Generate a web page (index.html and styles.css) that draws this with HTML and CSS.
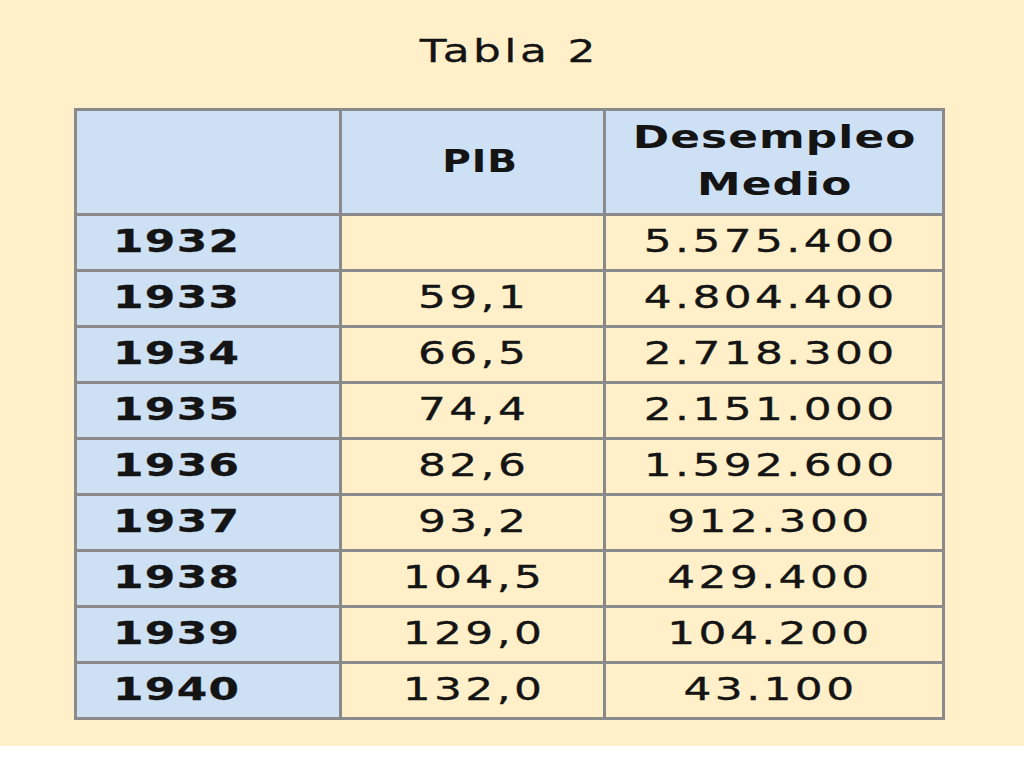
FILE: index.html
```html
<!DOCTYPE html>
<html lang="es">
<head>
<meta charset="utf-8">
<title>Tabla 2</title>
<link rel="stylesheet" href="styles.css">
</head>
<body>
<div class="sheet">
  <h1 class="title"><span class="wide">Tabla 2</span></h1>
  <table class="data">
    <colgroup>
      <col class="c1"><col class="c2"><col class="c3">
    </colgroup>
    <thead>
      <tr>
        <th class="year"></th>
        <th class="pib"><span class="wide">PIB</span></th>
        <th><span class="wide">Desempleo</span><br><span class="wide">Medio</span></th>
      </tr>
    </thead>
    <tbody>
      <tr><th class="year"><span class="wide">1932</span></th><td></td><td class="num"><span class="wide">5.575.400</span></td></tr>
      <tr><th class="year"><span class="wide">1933</span></th><td><span class="wide">59,1</span></td><td class="num"><span class="wide">4.804.400</span></td></tr>
      <tr><th class="year"><span class="wide">1934</span></th><td><span class="wide">66,5</span></td><td class="num"><span class="wide">2.718.300</span></td></tr>
      <tr><th class="year"><span class="wide">1935</span></th><td><span class="wide">74,4</span></td><td class="num"><span class="wide">2.151.000</span></td></tr>
      <tr><th class="year"><span class="wide">1936</span></th><td><span class="wide">82,6</span></td><td class="num"><span class="wide">1.592.600</span></td></tr>
      <tr><th class="year"><span class="wide">1937</span></th><td><span class="wide">93,2</span></td><td class="num"><span class="wide">912.300</span></td></tr>
      <tr><th class="year"><span class="wide">1938</span></th><td><span class="wide">104,5</span></td><td class="num"><span class="wide">429.400</span></td></tr>
      <tr><th class="year"><span class="wide">1939</span></th><td><span class="wide">129,0</span></td><td class="num"><span class="wide">104.200</span></td></tr>
      <tr><th class="year"><span class="wide">1940</span></th><td><span class="wide">132,0</span></td><td class="num"><span class="wide">43.100</span></td></tr>
    </tbody>
  </table>
</div>
</body>
</html>
```
FILE: styles.css
```css
html, body {
  margin: 0;
  padding: 0;
  background: #ffffff;
}
body {
  font-family: "DejaVu Sans", Verdana, sans-serif;
  color: #141414;
}
.sheet {
  height: 746px;
  background: #fff0c9;
  box-sizing: border-box;
  padding-top: 33px;
}
.title {
  margin: 0 0 39px 0;
  height: 36px;
  line-height: 36px;
  font-size: 32px;
  font-weight: normal;
  text-align: center;
  width: 1016px;
  -webkit-text-stroke: 0.3px #141414;
}
.title .wide {
  letter-spacing: 2.5px;
  margin-right: -2.5px;
}
.wide {
  display: inline-block;
  transform: scaleX(1.37);
  transform-origin: center;
  letter-spacing: 2.5px;
  margin-right: -2.5px;
  white-space: nowrap;
}
.data {
  margin-left: 74px;
  border-collapse: collapse;
  table-layout: fixed;
  width: 868px;
  font-size: 32px;
}
.c1 { width: 265px; }
.c2 { width: 264px; }
.c3 { width: 339px; }
.data th, .data td {
  border: 3px solid #8a8a8a;
  padding: 0 0 4px 0;
  text-align: center;
  vertical-align: middle;
  font-weight: normal;
  height: 49px;
  background: #fff0c9;
  line-height: 36px;
}
.data td {
  -webkit-text-stroke: 0.35px #141414;
}
.data td.num {
  padding-right: 10px;
}
.data thead th {
  background: #cde0f4;
  font-weight: bold;
  height: 100px;
  padding: 0 0 2px 0;
  line-height: 47px;
}
.data thead th .wide {
  letter-spacing: 0.8px;
  margin-right: -0.8px;
}
.data thead th.pib {
  padding-left: 14px;
}
.data thead th.pib .wide {
  transform: scaleX(1.22);
}
.data th.year {
  background: #cde0f4;
  text-align: left;
  padding-left: 36px;
  font-weight: bold;
}
.data th.year .wide {
  transform-origin: left center;
  letter-spacing: 1px;
  -webkit-text-stroke: 0.3px #141414;
}
```
